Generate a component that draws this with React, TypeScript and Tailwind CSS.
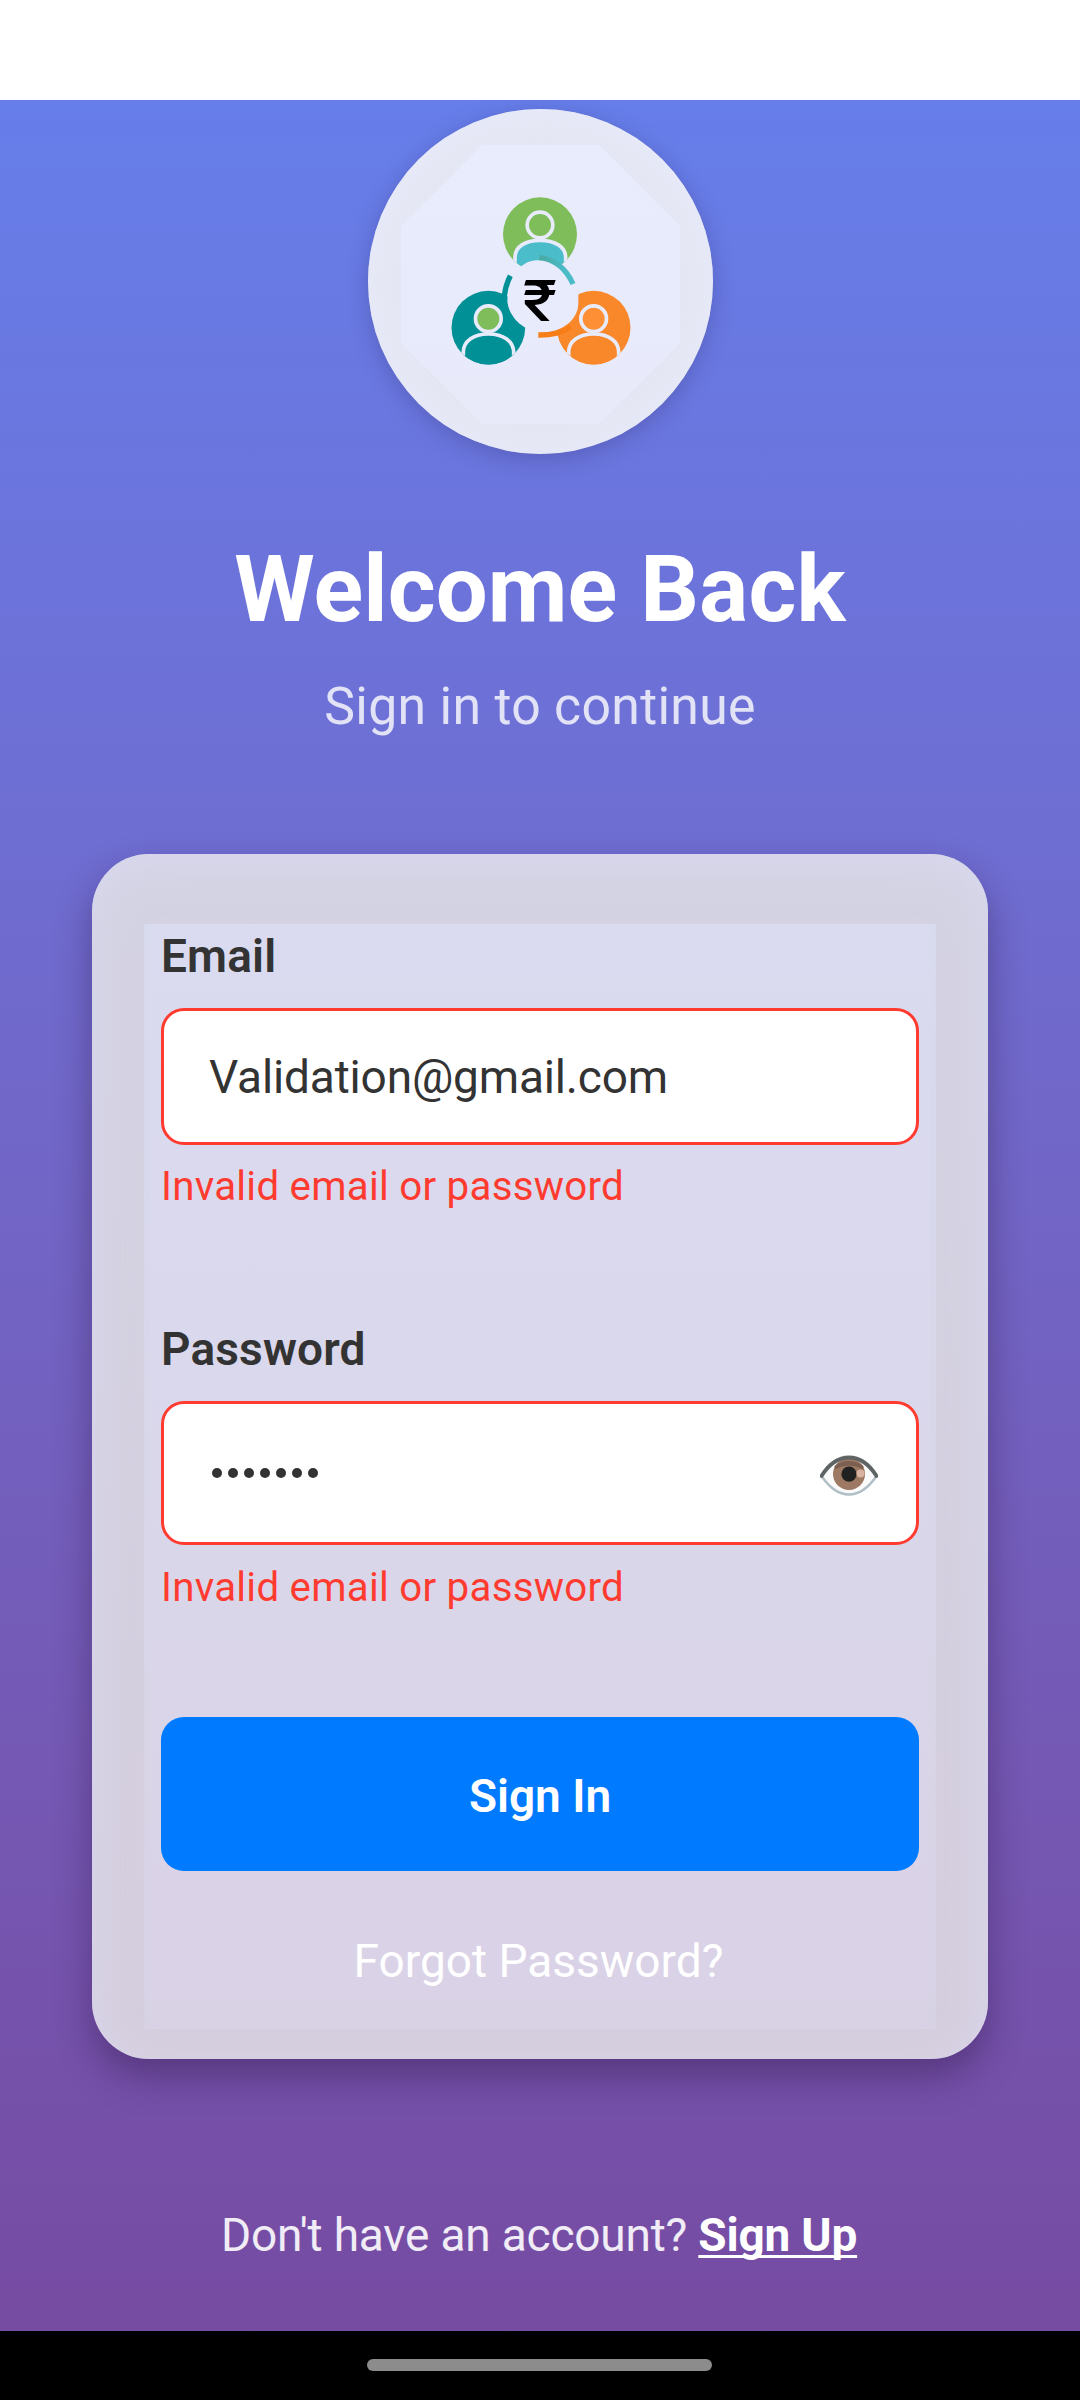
import React from "react";

const HALO = "#e8ebfb";

function Logo() {
  return (
    <svg className="absolute inset-0 size-full" viewBox="54 57 1035 1035" fill="none">
      <defs>
        <clipPath id="top"><circle cx="570" cy="433" r="111" /></clipPath>
        <clipPath id="left"><circle cx="415" cy="713" r="110.500" /></clipPath>
        <clipPath id="right"><circle cx="731" cy="713" r="110.500" /></clipPath>
        <linearGradient id="arc" x1="570" y1="503" x2="640" y2="540" gradientUnits="userSpaceOnUse">
          <stop stopColor="#4aa9a2" />
          <stop offset="1" stopColor="#4bbbc8" />
        </linearGradient>
      </defs>
      <g clipPath="url(#top)">
        <rect x="450" y="310" width="240" height="240" fill="#7ebd59" />
        <path d="M495 560V503C495 470 525 451 570 451S647 470 647 503V560" fill="#4bbdca" stroke={HALO} strokeWidth="11" />
        <path d="M450 509H490V560H450ZM652 509H700V560H652Z" fill={HALO} />
        <circle cx="570" cy="405" r="38.500" fill="#7ebd59" stroke={HALO} strokeWidth="11" />
      </g>
      <g clipPath="url(#left)">
        <rect x="300" y="590" width="240" height="250" fill="#009096" />
        <path d="M340 850V787C340 754 370 732 415 732S491 754 491 787V850" fill="#009096" stroke={HALO} strokeWidth="11" />
        <path d="M300 787H335V850H300ZM496 787H540V850H496Z" fill={HALO} />
        <circle cx="415" cy="686" r="38.500" fill="#7ebd59" stroke={HALO} strokeWidth="11" />
      </g>
      <g clipPath="url(#right)">
        <rect x="610" y="590" width="240" height="250" fill="#f9882b" />
        <path d="M656 850V787C656 754 686 732 731 732S806 754 806 787V850" fill="#f9882b" stroke={HALO} strokeWidth="11" />
        <path d="M610 787H651V850H610ZM811 787H850V850H811Z" fill={HALO} />
        <circle cx="731" cy="686" r="38.500" fill="#ff8f34" stroke={HALO} strokeWidth="11" />
      </g>
      <path d="M578 511A107 107 0 0 1 685 590V640C685 690 636 727 578 727A107 107 0 0 1 472 635C472 570 510 511 560 511Z" fill={HALO} />
      <path d="M481 557Q467 584 463 618" stroke="#009096" strokeWidth="16" />
      <path d="M568 503Q636 510 669 582" stroke="url(#arc)" strokeWidth="16" />
      <path d="M565 735Q623 736 663 711" stroke="#f77d17" strokeWidth="16" />
      <text transform="translate(517 692) scale(1.13 1)" fill="#000" className="font-[Inter,sans-serif] text-[170px] font-medium">₹</text>
    </svg>
  );
}

function Eye() {
  return (
    <svg className="h-[42px] w-[58px]" viewBox="0 0 58 42" fill="none">
      <path d="M1 21Q13 3 29 3T57 21Q43 40 29 40T1 21Z" fill="#fafafa" />
      <path d="M1.500 21Q14 39.500 29 39.500T56.500 21" stroke="#b0bec5" strokeWidth="2.400" />
      <circle cx="29" cy="19" r="16" fill="#9d7862" />
      <path d="M14.500 11Q28 1 43.500 11L43 14Q29 7 15 14Z" fill="#7b5f50" />
      <circle cx="29" cy="19.200" r="7.600" fill="#212121" />
      <circle cx="40.500" cy="18.500" r="4" fill="#d9b3a0" />
      <path d="M1.500 21Q13 2.500 29 2.500T56.500 21" stroke="#5f6464" strokeWidth="3.800" strokeLinecap="round" />
    </svg>
  );
}

const labelCls = "text-[46px] leading-[54px] font-semibold tracking-[0.150px] text-[#333]";
const errorCls = "text-[40.250px] leading-[48px] tracking-[0.260px] text-[#ff3b30] whitespace-nowrap";
const boxCls = "flex items-center rounded-[23px] border-[3px] border-[#ff3b30] bg-white pl-[45px] pr-[38px] text-[46px] tracking-[-0.160px] text-[#333]";

export default function App() {
  return (
    <div className="flex h-[2400px] w-[1080px] flex-col overflow-hidden bg-white font-[Roboto,sans-serif]">
      <div className="h-[100px] shrink-0 bg-white" />
      <main className="flex h-[2231px] shrink-0 flex-col items-center overflow-hidden bg-linear-to-b from-[#667eea] to-[#764ba2] pt-[9px]">
        <div className="relative ml-px size-[345px] shrink-0 rounded-full bg-[#e4e6f3] shadow-[0_5px_22px_rgba(40,30,90,0.26),inset_0_4px_40px_#e8ebfb]">
          <div className="absolute top-[36px] left-[33px] size-[279px] bg-linear-to-b from-[#e8ecfd] to-[#e8eafa] [clip-path:polygon(29%_0,71%_0,100%_29%,100%_71%,71%_100%,29%_100%,0_71%,0_29%)]" />
          <Logo />
        </div>
        <h1 className="mt-[82px] text-[92px] leading-[108px] font-bold tracking-[0.100px] whitespace-nowrap text-white">Welcome Back</h1>
        <p className="mt-[33px] text-[51.750px] leading-[60px] tracking-[0.300px] whitespace-nowrap text-white/80">Sign in to continue</p>
        <section className="mt-[117px] h-[1205px] w-[896px] shrink-0 rounded-[57px] bg-linear-to-b from-[#d4d3e3] to-[#d5cede] px-[52px] pt-[70px] shadow-[0_18px_36px_rgba(50,25,75,0.45),inset_0_12px_44px_rgba(218,218,242,0.7)]">
          <div className="flex h-[1105px] flex-col bg-linear-to-b from-[#dadbf0] via-[#dad7eb] to-[#dad2e6] px-[17px] pt-[5px] shadow-[inset_0_-28px_0_rgba(205,210,215,0.12),inset_5px_0_0_rgba(205,210,225,0.12),inset_-6px_0_0_rgba(205,210,225,0.12)]">
            <label className={labelCls}>Email</label>
            <div className={"mt-[25px] h-[137px] " + boxCls}><span className="mt-[2px]">Validation@gmail.com</span></div>
            <p className={"mt-[18px] " + errorCls}>Invalid email or password</p>
            <label className={"mt-[111px] " + labelCls}>Password</label>
            <div className={"mt-[25px] h-[144px] justify-between " + boxCls}>
              <div className="flex gap-[6.400px] pl-[3px]">
                {Array.from({ length: 7 }, (_, i) => (
                  <span key={i} className="size-[9.600px] rounded-full bg-[#333]" />
                ))}
              </div>
              <div className="mt-[5px]"><Eye /></div>
            </div>
            <p className={"mt-[19px] " + errorCls}>Invalid email or password</p>
            <button className="mt-[105px] h-[154px] rounded-[23px] bg-[#007bff] pt-[4px] text-[46px] font-semibold text-white">Sign In</button>
            <a className="mt-[63px] pr-[3px] text-center text-[46px] leading-[54px] text-white">Forgot Password?</a>
          </div>
        </section>
        <p className="mt-[149px] mr-[2px] text-[46px] leading-[54px] tracking-[-0.200px] whitespace-nowrap text-white/90">
          Don't have an account?{" "}
          <a className="font-bold text-white underline decoration-[3px] underline-offset-[4px] [text-decoration-skip-ink:none]">Sign Up</a>
        </p>
      </main>
      <footer className="flex h-[69px] shrink-0 justify-center bg-black pt-[28px] pr-px">
        <div className="h-[12px] w-[345px] rounded-full bg-[#8c8c8c]" />
      </footer>
    </div>
  );
}
